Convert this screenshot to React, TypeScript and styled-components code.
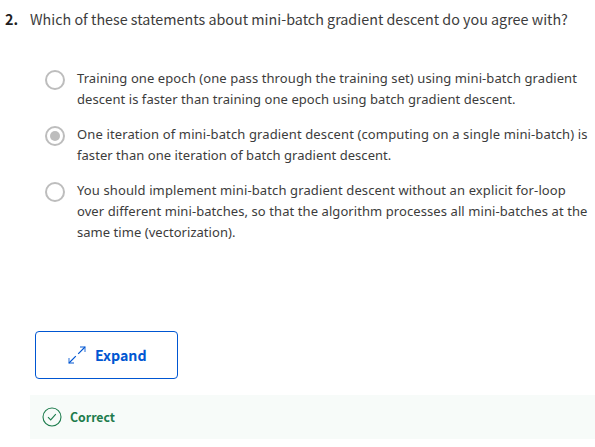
import React from 'react';
import styled, { createGlobalStyle } from 'styled-components';

const GlobalStyle = createGlobalStyle`
  * { box-sizing: border-box; }
  body { margin: 0; background: #fff; overflow: hidden; }
`;

const Page = styled.main`
  display: flex;
  flex-direction: column;
  width: 595px;
  height: 447px;
  background: #fff;
  color: #3c3c3c;
  font-family: "Noto Sans CJK SC", "Open Sans", sans-serif;
`;

const Question = styled.header`
  display: flex;
  height: 70px;
  padding: 8px 0 0 5px;
  font-size: 14.33px;
  line-height: 21px;
  white-space: nowrap;
`;

const QuestionNumber = styled.span`
  width: 25px;
  color: #1f1f1f;
  font-weight: 700;
`;

const Options = styled.div`
  display: flex;
  flex-direction: column;
  gap: 16px;
  height: 261px;
  padding: 0 0 0 45px;
`;

const Option = styled.label`
  display: flex;
  align-items: flex-start;
  gap: 12px;
`;

const Radio = styled.span<{ $checked?: boolean }>`
  display: flex;
  flex: none;
  align-items: center;
  justify-content: center;
  width: 20px;
  height: 20px;
  border: 2px solid #bdbdbd;
  border-radius: 50%;

  &::after {
    content: "";
    width: 10px;
    height: 10px;
    border-radius: 50%;
    background: ${({ $checked }) => ($checked ? '#bdbdbd' : 'transparent')};
  }
`;

const OptionText = styled.span`
  display: flex;
  flex-direction: column;
  margin-top: -2px;
  font-family: "Noto Sans", sans-serif;
  font-size: 13px;
  line-height: 21px;
  white-space: nowrap;
`;

const Line = styled.span<{ $tracking: number }>`
  letter-spacing: ${({ $tracking }) => $tracking}px;
`;

const ExpandButton = styled.button`
  display: flex;
  flex: none;
  align-items: center;
  gap: 9px;
  width: 143px;
  height: 48px;
  margin-left: 35px;
  padding: 0 0 1px 32px;
  border: 1px solid #0056d2;
  border-radius: 4px;
  background: #fff;
  color: #0056d2;
  font: 700 14.2px/20px "Noto Sans CJK SC", sans-serif;
`;

const ButtonLabel = styled.span`
  padding-top: 0;
`;

const Feedback = styled.section`
  display: flex;
  align-items: center;
  gap: 8px;
  height: 44px;
  margin: 16px 0 0 30px;
  padding-left: 12px;
  background: #f7fbf9;
  color: #1d7c4d;
  font-size: 12.3px;
  font-weight: 700;
  line-height: 20px;
`;

const Icon = styled.svg`
  display: block;
  flex: none;
  fill: none;
  stroke: currentColor;
`;

const options = [
  {
    checked: false,
    lines: [
      { text: 'Training one epoch (one pass through the training set) using mini-batch gradient', tracking: 0.086 },
      { text: 'descent is faster than training one epoch using batch gradient descent.', tracking: 0.06 },
    ],
  },
  {
    checked: true,
    lines: [
      { text: 'One iteration of mini-batch gradient descent (computing on a single mini-batch) is', tracking: 0.125 },
      { text: 'faster than one iteration of batch gradient descent.', tracking: 0.05 },
    ],
  },
  {
    checked: false,
    lines: [
      { text: 'You should implement mini-batch gradient descent without an explicit for-loop', tracking: 0.115 },
      { text: 'over different mini-batches, so that the algorithm processes all mini-batches at the', tracking: 0.08 },
      { text: 'same time (vectorization).', tracking: 0.04 },
    ],
  },
];

export default function App() {
  return (
    <Page>
      <GlobalStyle />
      <Question>
        <QuestionNumber>2.</QuestionNumber>
        <span>Which of these statements about mini-batch gradient descent do you agree with?</span>
      </Question>
      <Options role="radiogroup">
        {options.map((option) => (
          <Option key={option.lines[0].text}>
            <Radio role="radio" aria-checked={option.checked} $checked={option.checked} />
            <OptionText>
              {option.lines.map((line) => (
                <Line key={line.text} $tracking={line.tracking}>{line.text}</Line>
              ))}
            </OptionText>
          </Option>
        ))}
      </Options>
      <ExpandButton type="button">
        <Icon width="18" height="18" viewBox="0 0 18 18" aria-hidden="true">
          <path d="M12 1h5v5M6 17H1v-5" strokeWidth="1.3" opacity="0.65" />
          <path d="M17 1l-6.8 6.8M7.8 10.2L1 17" strokeWidth="1.2" />
        </Icon>
        <ButtonLabel>Expand</ButtonLabel>
      </ExpandButton>
      <Feedback>
        <Icon width="20" height="20" viewBox="0 0 20 20" aria-hidden="true">
          <circle cx="10" cy="10" r="9" strokeWidth="1.1" />
          <path d="M6 10.2l2.7 2.7 5.1-5.8" strokeWidth="1.1" />
        </Icon>
        <span>Correct</span>
      </Feedback>
    </Page>
  );
}
